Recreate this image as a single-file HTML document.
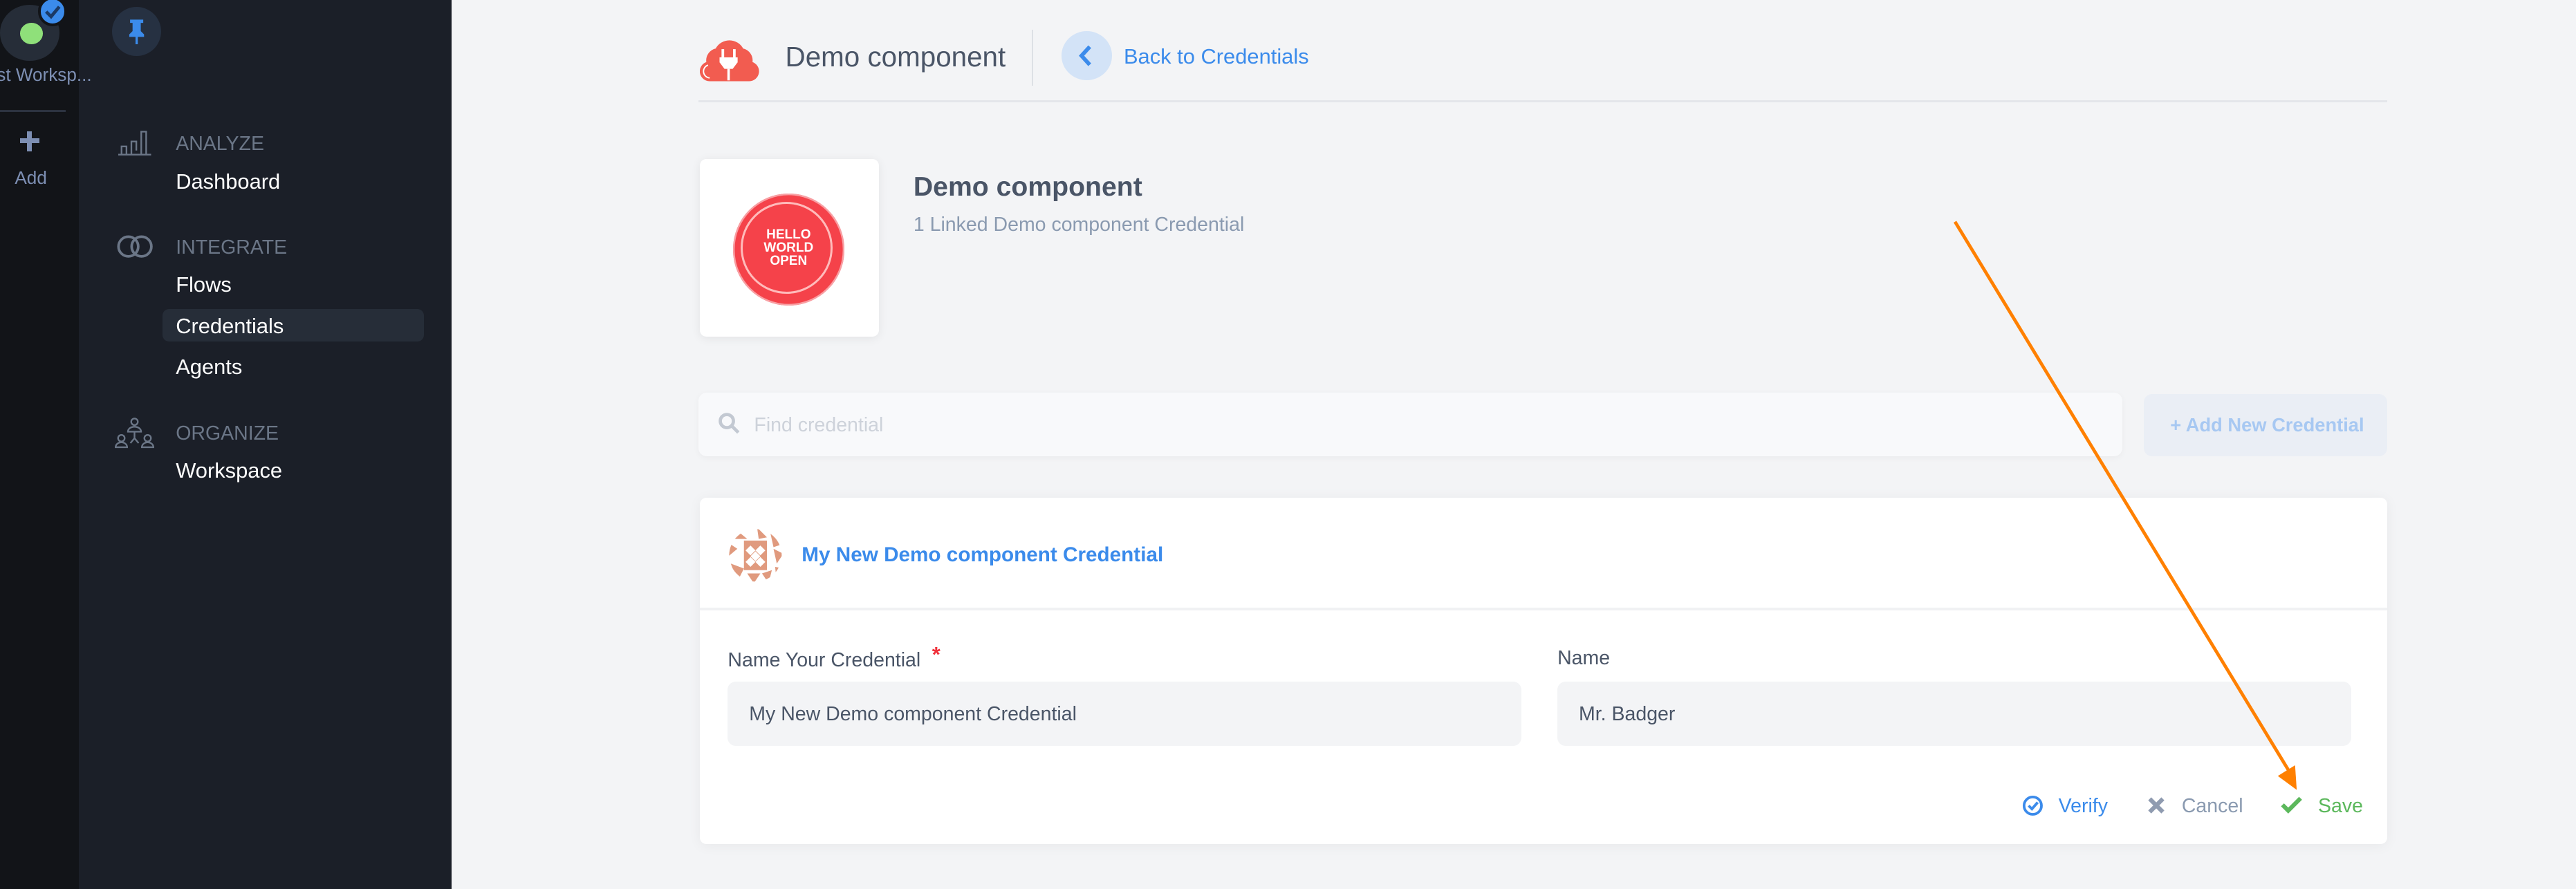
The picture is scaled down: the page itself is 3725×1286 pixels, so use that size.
<!DOCTYPE html>
<html><head><meta charset="utf-8"><style>
html,body{margin:0;padding:0;width:3725px;height:1286px;overflow:hidden;background:#f3f4f6}
#w{zoom:2.37564;width:1568px;height:541.5px;position:relative;font-family:"Liberation Sans",sans-serif;background:#f3f4f6;overflow:hidden}
.a{position:absolute;white-space:nowrap}
.nav{color:#fff;font-size:13px}
.sec{color:#6b7687;font-size:12px}
</style></head><body><div id="w">
<div class="a" style="left:0;top:0;width:48px;height:542px;background:#121418"></div>
<div class="a" style="left:48px;top:0;width:227px;height:542px;background:#1b1f28"></div>
<div class="a" style="left:0;top:3px;width:36px;height:34px;border-radius:50%;background:#262d38"></div>
<div class="a" style="left:12px;top:14px;width:14px;height:13px;border-radius:50%;background:#8fe07a"></div>
<div class="a" style="left:23px;top:-2px;width:18px;height:18px;border-radius:50%;background:#3b8beb;border:2px solid #121418;box-sizing:border-box"></div>
<svg class="a" style="left:26px;top:2px" width="12" height="10" viewBox="0 0 12 10"><path d="M2 5l3 3 5-6" stroke="#1b3a66" stroke-width="2" fill="none"/></svg>
<div class="a" style="left:-2px;top:39px;font-size:11px;color:#7d8fb3">st Worksp...</div>
<div class="a" style="left:0;top:67px;width:40px;height:1px;background:#2c3340"></div>
<div class="a" style="left:12px;top:84px;width:12px;height:3px;background:#7d8fb3"></div>
<div class="a" style="left:16.5px;top:80px;width:3px;height:12px;background:#7d8fb3"></div>
<div class="a" style="left:9px;top:102px;font-size:11px;color:#7d8fb3">Add</div>
<div class="a" style="left:68px;top:4px;width:30px;height:30px;border-radius:50%;background:#263142"></div>
<svg class="a" style="left:76px;top:11px" width="14" height="16" viewBox="0 0 14 16"><path d="M3 1h8v2h-1.5v5l2 2v1.5h-9V10l2-2V3H3z M6.3 11.5h1.4V16H6.3z" fill="#3b8beb"/></svg>
<svg class="a" style="left:72px;top:79px" width="20" height="16" viewBox="0 0 20 16" fill="none" stroke="#6b7687" stroke-width="1"><path d="M0 15h20M2 15V10h3v5M8 15V7h3v5.5M14 15V1h3v14"/></svg>
<div class="a sec" style="left:107px;top:81px">ANALYZE</div>
<div class="a nav" style="left:107px;top:103px">Dashboard</div>
<svg class="a" style="left:71px;top:143px" width="22" height="14" viewBox="0 0 22 14" fill="none" stroke="#6b7687" stroke-width="1.6"><circle cx="7" cy="7" r="6"/><circle cx="15" cy="7" r="6"/></svg>
<div class="a sec" style="left:107px;top:144px">INTEGRATE</div>
<div class="a nav" style="left:107px;top:166px">Flows</div>
<div class="a" style="left:99px;top:188px;width:159px;height:20px;border-radius:4px;background:#262d38"></div>
<div class="a nav" style="left:107px;top:191px">Credentials</div>
<div class="a nav" style="left:107px;top:216px">Agents</div>
<svg class="a" style="left:70px;top:254px" width="24" height="19" viewBox="0 0 24 19" fill="none" stroke="#6b7687" stroke-width="1"><circle cx="12" cy="3" r="2"/><path d="M8 9a4 3 0 0 1 8 0z"/><circle cx="4" cy="13" r="2"/><path d="M0.5 18.5a3.5 3 0 0 1 7 0z"/><circle cx="20" cy="13" r="2"/><path d="M16.5 18.5a3.5 3 0 0 1 7 0z M12 9v4l-2.5 3M12 13l2.5 3"/></svg>
<div class="a sec" style="left:107px;top:257px">ORGANIZE</div>
<div class="a nav" style="left:107px;top:279px">Workspace</div>

<svg class="a" style="left:426px;top:19px" width="36" height="32" viewBox="0 0 36 32"><path d="M6 30a5.5 5.5 0 0 1-1.5-10.8A7 7 0 0 1 10 11a9 9 0 0 1 16 0 7 7 0 0 1 5.5 8.2A5.5 5.5 0 0 1 30 30z" fill="#f25c50" stroke="#f25c50" stroke-width="1"/><path d="M6 28.5a4 4 0 0 1-1-7.8" stroke="#fff" stroke-width=".8" fill="none"/><path d="M14 11v5M21 11v5" stroke="#fff" stroke-width="1.6"/><path d="M12 16h11v3l-3 4h-5l-3-4z" fill="#fff"/><path d="M17.5 23v7" stroke="#fff" stroke-width="1.5"/></svg>
<div class="a" style="left:478px;top:25px;font-size:17px;color:#4a5567">Demo component</div>
<div class="a" style="left:628px;top:18px;width:1px;height:34px;background:#dde0e5"></div>
<div class="a" style="left:646px;top:19px;width:31px;height:30px;border-radius:50%;background:#d3e3f7"></div>
<svg class="a" style="left:656px;top:27px" width="10" height="14" viewBox="0 0 10 14"><path d="M7.5 1.5L2.5 7l5 5.5" stroke="#3b8beb" stroke-width="2.4" fill="none"/></svg>
<div class="a" style="left:684px;top:27px;font-size:13px;color:#3b8beb">Back to Credentials</div>
<div class="a" style="left:425px;top:61px;width:1028px;height:1.5px;background:#e4e6ea"></div>

<div class="a" style="left:426px;top:97px;width:109px;height:108px;background:#fff;border-radius:4px;box-shadow:0 1px 6px rgba(0,0,0,.07)"></div>
<div class="a" style="left:446px;top:118px;width:68px;height:68px;border-radius:50%;background:#f5424a;box-shadow:0 0 0 1px #f8a0a4 inset"></div>
<div class="a" style="left:451px;top:123px;width:56px;height:56px;border-radius:50%;border:1.5px solid #fbb;box-sizing:border-box"></div>
<div class="a" style="left:455px;top:139px;width:50px;text-align:center;color:#fff;font-weight:bold;font-size:8px;line-height:8px">HELLO<br>WORLD<br>OPEN</div>
<div class="a" style="left:556px;top:105px;font-size:16.5px;font-weight:bold;color:#4a5567">Demo component</div>
<div class="a" style="left:556px;top:130px;font-size:12px;color:#8a9ab0">1 Linked Demo component Credential</div>

<div class="a" style="left:425px;top:239px;width:867px;height:39px;background:#f8f9fb;border-radius:5px;box-shadow:0 1px 4px rgba(0,0,0,.04)"></div>
<svg class="a" style="left:437px;top:251px" width="14" height="14" viewBox="0 0 14 14" fill="none" stroke="#c3c9d2" stroke-width="2"><circle cx="5.5" cy="5.5" r="4"/><path d="M8.5 8.5l4 4"/></svg>
<div class="a" style="left:459px;top:252px;font-size:12px;color:#cdd2da">Find credential</div>
<div class="a" style="left:1305px;top:240px;width:148px;height:38px;background:#eaeef5;border-radius:5px"></div>
<div class="a" style="left:1321px;top:252px;font-size:11.5px;font-weight:bold;color:#a7c8f2">+ Add New Credential</div>

<div class="a" style="left:426px;top:303px;width:1027px;height:211px;background:#fff;border-radius:4px;box-shadow:0 1px 8px rgba(0,0,0,.05)"></div>
<div class="a" style="left:426px;top:370px;width:1027px;height:1.5px;background:#f0f1f3"></div>
<svg class="a" style="left:443px;top:321px" width="34" height="34" viewBox="0 0 34 34"><defs><clipPath id="c"><circle cx="17" cy="17" r="16"/></clipPath></defs><g clip-path="url(#c)" fill="#e09a7e"><path d="M10 8h14v18H10z"/><path d="M14 11l3 3-3 3-3-3zM20 11l3 3-3 3-3-3zM14 18l3 3-3 3-3-3zM20 18l3 3-3 3-3-3zM17 14.5l3 3-3 3-3-3z" fill="#fff"/><path d="M6 2l6 5H4zM18 0l6 6-5 1zM26 3l8 7-6 2zM0 9l6 4-6 5zM28 13l6 3-4 6zM29 24l5 1-4 9zM2 22l8 3-4 8zM12 28l8 0-4 6zM21 28l6-2-2 8z"/></g></svg>
<div class="a" style="left:488px;top:331px;font-size:12.5px;font-weight:bold;color:#3b8beb">My New Demo component Credential</div>

<div class="a" style="left:443px;top:394px;font-size:12px;color:#4a5567">Name Your Credential <span style="color:#f0303a;font-weight:bold;font-size:13px;position:relative;top:-3px">&nbsp;*</span></div>
<div class="a" style="left:948px;top:394px;font-size:12px;color:#4a5567">Name</div>
<div class="a" style="left:443px;top:415px;width:483px;height:39px;background:#f3f4f6;border-radius:5px"></div>
<div class="a" style="left:948px;top:415px;width:483px;height:39px;background:#f3f4f6;border-radius:5px"></div>
<div class="a" style="left:456px;top:428px;font-size:12px;color:#4a5567">My New Demo component Credential</div>
<div class="a" style="left:961px;top:428px;font-size:12px;color:#4a5567">Mr. Badger</div>

<svg class="a" style="left:1231px;top:484px" width="13" height="13" viewBox="0 0 13 13" fill="none" stroke="#3b8beb" stroke-width="1.6"><circle cx="6.5" cy="6.5" r="5.3"/><path d="M4 6.5l2 2 3.5-4"/></svg>
<div class="a" style="left:1253px;top:484px;font-size:12px;color:#3b8beb">Verify</div>
<svg class="a" style="left:1307px;top:485px" width="11" height="11" viewBox="0 0 11 11"><path d="M1.5 1.5l8 8M9.5 1.5l-8 8" stroke="#8f9bb0" stroke-width="2.6"/></svg>
<div class="a" style="left:1328px;top:484px;font-size:12px;color:#8a9ab0">Cancel</div>
<svg class="a" style="left:1388px;top:484px" width="14" height="12" viewBox="0 0 14 12"><path d="M1.5 6l3.5 3.5L12.5 2" stroke="#5cb85c" stroke-width="2.6" fill="none"/></svg>
<div class="a" style="left:1411px;top:484px;font-size:12px;color:#5cb85c">Save</div>

<svg class="a" style="left:0;top:0" width="1568" height="542"><path d="M1190 135L1393 469" stroke="#ff8000" stroke-width="2" fill="none"/><path d="M1386.5 472.5L1398 481 1397 466z" fill="#ff8000"/></svg>
</div></body></html>
